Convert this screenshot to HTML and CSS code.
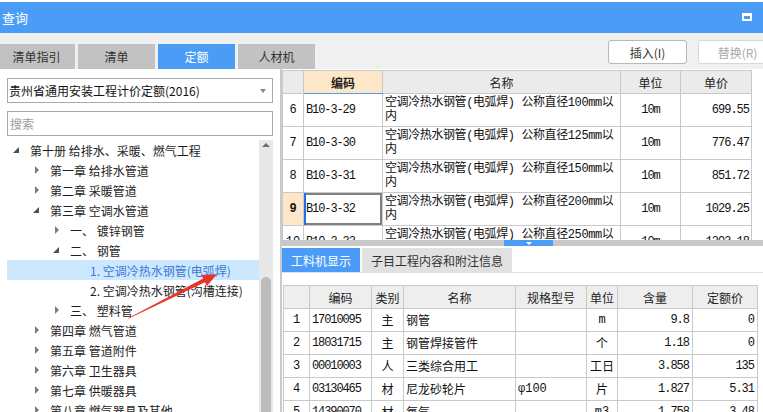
FILE: index.html
```html
<!DOCTYPE html>
<html lang="zh-CN">
<head>
<meta charset="utf-8">
<title>查询</title>
<link rel="stylesheet" href="styles.css">
</head>
<body>
<div class="app">
  <div class="topstrip"></div>
  <header class="titlebar">
    <span class="title">查询</span>
    <span class="max-icon"></span>
  </header>
  <div class="toolbar">
    <div class="tabs">
      <div class="tab">清单指引</div>
      <div class="tab">清单</div>
      <div class="tab active">定额</div>
      <div class="tab">人材机</div>
    </div>
    <div class="buttons">
      <button class="btn">插入(I)</button>
      <button class="btn disabled">替换(R)</button>
    </div>
  </div>
  <div class="main">
    <aside class="left">
      <div class="select"><span>贵州省通用安装工程计价定额(2016)</span><span class="caret"></span></div>
      <div class="search">搜索</div>
      <div class="tree-wrap">
        <ul class="tree">
          <li class="node l0"><span class="tw open"></span>第十册 给排水、采暖、燃气工程</li>
          <li class="node l1"><span class="tw closed"></span>第一章 给排水管道</li>
          <li class="node l1"><span class="tw closed"></span>第二章 采暖管道</li>
          <li class="node l1"><span class="tw open"></span>第三章 空调水管道</li>
          <li class="node l2"><span class="tw closed"></span>一、 镀锌钢管</li>
          <li class="node l2"><span class="tw open"></span>二、 钢管</li>
          <li class="node l3 sel"><span class="tw"></span>1. 空调冷热水钢管(电弧焊)</li>
          <li class="node l3"><span class="tw"></span>2. 空调冷热水钢管(沟槽连接)</li>
          <li class="node l2"><span class="tw closed"></span>三、 塑料管</li>
          <li class="node l1"><span class="tw closed"></span>第四章 燃气管道</li>
          <li class="node l1"><span class="tw closed"></span>第五章 管道附件</li>
          <li class="node l1"><span class="tw closed"></span>第六章 卫生器具</li>
          <li class="node l1"><span class="tw closed"></span>第七章 供暖器具</li>
          <li class="node l1"><span class="tw closed"></span>第八章 燃气器具及其他</li>
        </ul>
        <div class="vscroll"><span class="up"></span><span class="thumb"></span></div>
      </div>
    </aside>
    <section class="right">
      <div class="top-grid">
        <table class="grid">
          <colgroup>
            <col class="w-no"><col class="w-code"><col class="w-name"><col class="w-unit"><col class="w-price">
          </colgroup>
          <thead>
            <tr><th></th><th class="hl">编码</th><th>名称</th><th>单位</th><th>单价</th></tr>
          </thead>
          <tbody>
            <tr><td class="num">6</td><td class="code">B10-3-29</td><td class="name">空调冷热水钢管(电弧焊) 公称直径100mm以<br>内</td><td class="unit">10m</td><td class="price">699.55</td></tr>
            <tr><td class="num">7</td><td class="code">B10-3-30</td><td class="name">空调冷热水钢管(电弧焊) 公称直径125mm以<br>内</td><td class="unit">10m</td><td class="price">776.47</td></tr>
            <tr><td class="num">8</td><td class="code">B10-3-31</td><td class="name">空调冷热水钢管(电弧焊) 公称直径150mm以<br>内</td><td class="unit">10m</td><td class="price">851.72</td></tr>
            <tr class="cur"><td class="num">9</td><td class="code">B10-3-32</td><td class="name">空调冷热水钢管(电弧焊) 公称直径200mm以<br>内</td><td class="unit">10m</td><td class="price">1029.25</td></tr>
            <tr><td class="num">10</td><td class="code">B10-3-33</td><td class="name">空调冷热水钢管(电弧焊) 公称直径250mm以<br>内</td><td class="unit">10m</td><td class="price">1203.18</td></tr>
          </tbody>
        </table>
      </div>
      <div class="splitter"><span class="handle"><span class="down"></span></span></div>
      <div class="subtabs">
        <div class="subtab active">工料机显示</div>
        <div class="subtab">子目工程内容和附注信息</div>
      </div>
      <div class="bottom-grid">
        <table class="grid grid-b">
          <colgroup>
            <col class="b-no"><col class="b-code"><col class="b-cat"><col class="b-name"><col class="b-spec"><col class="b-unit"><col class="b-qty"><col class="b-price">
          </colgroup>
          <thead>
            <tr><th></th><th>编码</th><th>类别</th><th>名称</th><th>规格型号</th><th>单位</th><th>含量</th><th>定额价</th></tr>
          </thead>
          <tbody>
            <tr><td class="num">1</td><td class="code">17010095</td><td class="ctr">主</td><td class="txt">钢管</td><td class="txt"></td><td class="ctr">m</td><td class="price">9.8</td><td class="price">0</td></tr>
            <tr><td class="num">2</td><td class="code">18031715</td><td class="ctr">主</td><td class="txt">钢管焊接管件</td><td class="txt"></td><td class="ctr">个</td><td class="price">1.18</td><td class="price">0</td></tr>
            <tr><td class="num">3</td><td class="code">00010003</td><td class="ctr">人</td><td class="txt">三类综合用工</td><td class="txt"></td><td class="ctr">工日</td><td class="price">3.858</td><td class="price">135</td></tr>
            <tr><td class="num">4</td><td class="code">03130465</td><td class="ctr">材</td><td class="txt">尼龙砂轮片</td><td class="txt spec">φ100</td><td class="ctr">片</td><td class="price">1.827</td><td class="price">5.31</td></tr>
            <tr><td class="num">5</td><td class="code">14390070</td><td class="ctr">材</td><td class="txt">氧气</td><td class="txt"></td><td class="ctr">m3</td><td class="price">1.758</td><td class="price">3.48</td></tr>
          </tbody>
        </table>
      </div>
    </section>
  </div>
  <svg class="annot" viewBox="0 0 763 412" width="763" height="412">
    <polygon class="arrow" points="128,318.3 203.2,278.4 201.3,274.9 216.9,274.2 206.9,286.1 205.0,282.2 128.3,318.8"/>
  </svg>
</div>
</body>
</html>
```

FILE: styles.css
```css
* { box-sizing: border-box; }
html, body { margin: 0; padding: 0; }
body {
  width: 763px;
  height: 412px;
  overflow: hidden;
  background: #f0f0f0;
  font-family: "Noto Sans CJK SC", "Noto Sans", sans-serif;
  font-size: 12px;
  color: #222;
}
.app {
  position: relative;
  width: 763px;
  height: 412px;
  display: flex;
  flex-direction: column;
}
.topstrip { height: 2px; flex: none; background: #fff; }

.titlebar {
  height: 31px;
  flex: none;
  background: #4a9cf6;
  color: #fff;
  display: flex;
  align-items: center;
  justify-content: space-between;
  padding: 0 11px 0 2px;
}
.title { font-size: 13px; }
.max-icon {
  width: 10px;
  height: 8px;
  border: 2px solid #fff;
  border-top-width: 3px;
  margin-top: -2px;
}

.toolbar {
  height: 36px;
  flex: none;
  display: flex;
  justify-content: space-between;
}
.tabs {
  display: flex;
  gap: 3px;
  align-self: flex-end;
  margin-left: -2px;
}
.tab {
  width: 77px;
  height: 25px;
  background: #c2c2c2;
  color: #333;
  display: flex;
  align-items: center;
  justify-content: center;
}
.tab.active { background: #4a9cf6; color: #fff; }
.buttons {
  display: flex;
  gap: 11px;
  margin-top: 7px;
  margin-right: -14px;
  align-self: flex-start;
}
.btn {
  width: 79px;
  height: 24px;
  border: 1px solid #b8b8b8;
  border-radius: 3px;
  background: #fff;
  font: inherit;
  color: #333;
  padding: 0;
}
.btn.disabled { color: #a8a8a8; border-color: #d8d8d8; }

.main { flex: 1; display: flex; min-height: 0; }

.left {
  width: 280px;
  flex: none;
  background: #fff;
  padding: 9px 7px 0 7px;
  display: flex;
  flex-direction: column;
}
.select {
  height: 25px;
  border: 1px solid #aaa;
  display: flex;
  align-items: center;
  justify-content: space-between;
  padding: 0 6px 0 1px;
  color: #111;
}
.caret {
  width: 0;
  height: 0;
  border-left: 3px solid transparent;
  border-right: 3px solid transparent;
  border-top: 4px solid #888;
}
.search {
  margin-top: 8px;
  height: 25px;
  border: 1px solid #aaa;
  color: #9c9c9c;
  padding-left: 2px;
  line-height: 23px;
}
.tree-wrap {
  margin-top: 4px;
  flex: 1;
  min-height: 0;
  display: flex;
  overflow: hidden;
}
.tree {
  list-style: none;
  margin: 0;
  padding: 0;
  flex: 1;
}
.node {
  height: 20px;
  display: flex;
  align-items: center;
  white-space: nowrap;
  color: #1e1e1e;
}
.node.l0 { padding-left: 3px; }
.node.l1 { padding-left: 23px; }
.node.l2 { padding-left: 43px; }
.node.l3 { padding-left: 63px; }
.node.sel { background: #cce8ff; color: #3d7ad3; }
.tw {
  width: 12px;
  height: 12px;
  margin-right: 8px;
  flex: none;
  display: flex;
  align-items: center;
  justify-content: center;
}
.tw.closed::before {
  content: "";
  border-left: 4px solid #7c7c7c;
  border-top: 4px solid transparent;
  border-bottom: 4px solid transparent;
  margin-left: 1px;
}
.tw.open::before {
  content: "";
  border-bottom: 6px solid #505050;
  border-left: 6px solid transparent;
}
.vscroll {
  width: 14px;
  flex: none;
  background: #e8e8e8;
  display: flex;
  flex-direction: column;
  align-items: center;
}
.up {
  margin-top: 3px;
  width: 0;
  height: 0;
  border-left: 4px solid transparent;
  border-right: 4px solid transparent;
  border-bottom: 4px solid #6e6e6e;
}
.thumb {
  margin-top: auto;
  width: 10px;
  height: 135px;
  background: #bcbcbc;
  border-radius: 5px 5px 0 0;
}

.right {
  flex: 1;
  min-width: 0;
  border-left: 2px solid #cacaca;
  background: #fff;
  display: flex;
  flex-direction: column;
}
.top-grid {
  height: 171px;
  flex: none;
  overflow: hidden;
  padding-top: 1px;
}
.grid {
  border-collapse: collapse;
  table-layout: fixed;
}
.grid th, .grid td {
  border: 1px solid #c9c9c9;
  padding: 0 2px;
  overflow: hidden;
  white-space: nowrap;
}
.grid th {
  height: 23px;
  background: #ebebeb;
  font-weight: normal;
  color: #222;
  text-align: center;
}
.grid th.hl {
  background: #fee6c8;
  font-weight: bold;
  border-bottom: 1px solid #4a9cf6;
}
.grid td {
  height: 33px;
  font-family: "Liberation Mono", "Noto Sans CJK SC", monospace;
  font-size: 12px;
  color: #111;
}
.w-no { width: 21px; }
.w-code { width: 79px; }
.w-name { width: 238px; }
.w-unit { width: 60px; }
.w-price { width: 71px; }
.grid { width: 469px; }
.num { text-align: center; }
.code { letter-spacing: -1.1px; }
.name { line-height: 14px; letter-spacing: -0.4px; }
.unit { text-align: center; letter-spacing: -1px; }
.price { text-align: right; letter-spacing: -1px; }
.cur .num { background: #fee6c8; font-weight: bold; }
.cur .code { box-shadow: inset 2px 0 0 #1f6fe8, inset 0 0 0 2px #808080; }

.splitter {
  height: 6px;
  flex: none;
  background: #c8c8c8;
  display: flex;
}
.handle {
  margin-left: 222px;
  width: 49px;
  height: 6px;
  background: #4a9cf6;
  display: flex;
  justify-content: center;
  align-items: center;
}
.down {
  width: 0;
  height: 0;
  border-left: 3px solid transparent;
  border-right: 3px solid transparent;
  border-top: 3px solid #fff;
}

.subtabs {
  height: 27px;
  flex: none;
  padding-top: 2px;
  display: flex;
  gap: 2px;
  border-bottom: 1px solid #dedede;
}
.subtab {
  height: 24px;
  padding: 0 9px;
  background: #e1e1e1;
  color: #333;
  display: flex;
  align-items: center;
}
.subtab.active { background: #4a9cf6; color: #fff; }

.bottom-grid {
  flex: 1;
  padding: 12px 0 0 1px;
  overflow: hidden;
}
.grid-b { width: 474px; }
.grid-b th { background: #eeeeee; }
.grid-b td { height: 23px; }
.b-no { width: 26px; }
.b-code { width: 62px; }
.b-cat { width: 32px; }
.b-name { width: 112px; }
.b-spec { width: 71px; }
.b-unit { width: 31px; }
.b-qty { width: 75px; }
.b-price { width: 65px; }
.grid-b .price { padding-right: 3px; }
.ctr { text-align: center; }
.txt { text-align: left; }
.spec { padding-left: 4px; }

.annot {
  position: absolute;
  left: 0;
  top: 0;
  pointer-events: none;
}
.arrow { fill: #e8352b; }
```
